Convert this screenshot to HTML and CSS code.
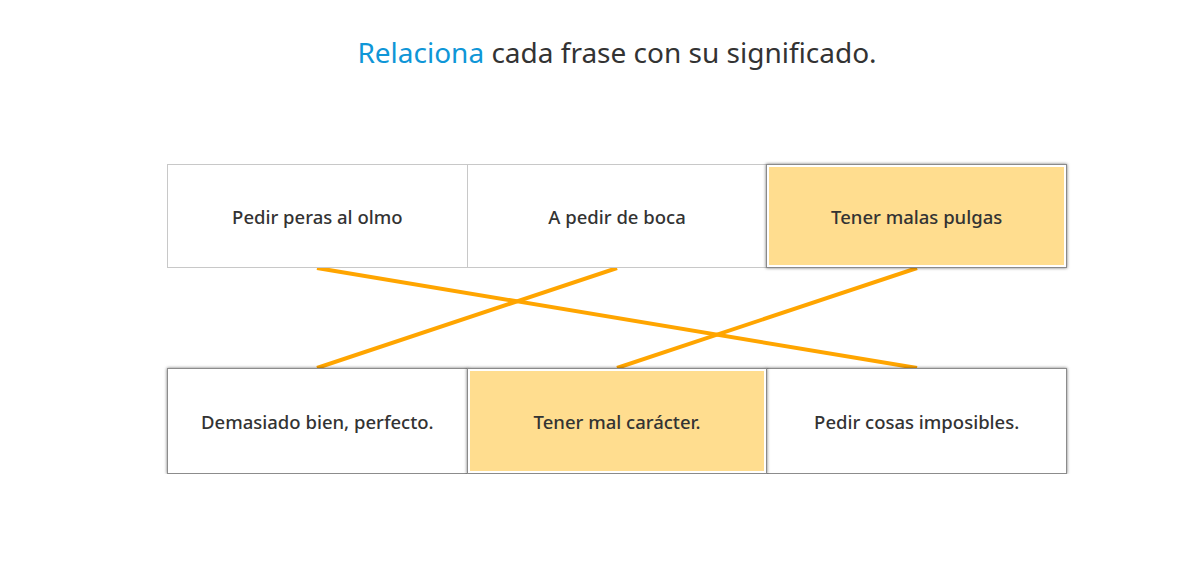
FILE: index.html
```html
<!DOCTYPE html>
<html lang="es">
<head>
    <meta charset="UTF-8">
    <meta name="viewport" content="width=device-width, initial-scale=1.0">
    <title>Relaciona</title>
    <link rel="stylesheet" href="styles.css">
</head>
<body>

<div class="page">
    <h1 class="title"><span class="accent">Relaciona</span> cada frase con su significado.</h1>

    <div class="board">
        <div class="row">
            <div class="card">Pedir peras al olmo</div>
            <div class="card">A pedir de boca</div>
            <div class="card selected">Tener malas pulgas</div>
        </div>

        <!-- connection lines -->
        <svg class="links" width="900" height="100" viewBox="0 0 900 100">
            <line x1="150" y1="0" x2="750" y2="100"></line>
            <line x1="450" y1="0" x2="150" y2="100"></line>
            <line x1="750" y1="0" x2="450" y2="100"></line>
        </svg>

        <div class="row bottom">
            <div class="card raised">Demasiado bien, perfecto.</div>
            <div class="card raised selected">Tener mal carácter.</div>
            <div class="card raised">Pedir cosas imposibles.</div>
        </div>
    </div>
</div>

</body>
</html>
```

FILE: styles.css
```css
body {
    margin: 0;
    font-family: "Noto Sans", "Open Sans", sans-serif;
    background-color: #ffffff;
    color: #333;
}

.page {
    padding-left: 48px;
    display: flex;
    flex-direction: column;
    align-items: center;
}

.title {
    margin: 31px 0 0;
    font-size: 28px;
    font-weight: 400;
    color: #333;
    line-height: 42px;
}

.accent {
    color: #0f96d7;
}

.board {
    width: 900px;
    margin-top: 91px;
    display: flex;
    flex-direction: column;
}

.row {
    display: flex;
}

.card {
    flex: 1;
    height: 104px;
    box-sizing: border-box;
    border: 1px solid #c8c8c8;
    display: flex;
    align-items: center;
    justify-content: center;
    font-size: 18.5px;
    font-weight: 500;
    color: #333;
    background: #ffffff;
}

.card + .card {
    margin-left: -1px;
}

.row.bottom .card {
    height: 106px;
}

.card.raised {
    border-color: #8c8c8c;
    box-shadow: 0 0 3px rgba(0, 0, 0, 0.55);
}

.card.selected {
    position: relative;
    border-color: #8a8a8a;
    background: #ffdd8f;
    box-shadow: inset 0 0 0 2px #ffffff, 0 0 3px rgba(0, 0, 0, 0.55);
}

.links {
    display: block;
}

.links line {
    stroke: #ffa500;
    stroke-width: 4;
}
```
